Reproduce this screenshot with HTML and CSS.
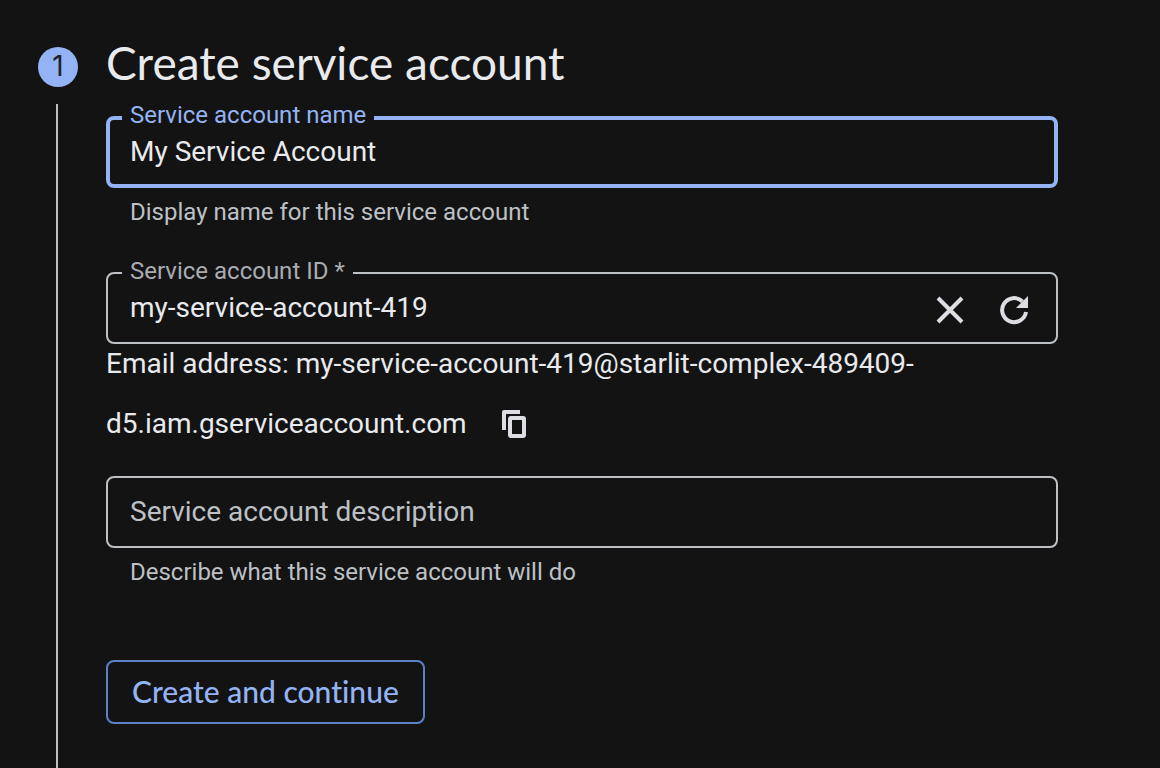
FILE: index.html
```html
<!DOCTYPE html>
<html lang="en">
<head>
<meta charset="utf-8">
<meta name="viewport" content="width=device-width, initial-scale=1">
<title>Create service account</title>
<link rel="stylesheet" href="styles.css">
</head>
<body>
<main class="step">
  <div class="step-rail">
    <span class="step-number">1</span>
    <span class="step-line"></span>
  </div>
  <form class="step-content">
    <h1 class="step-title">Create service account</h1>

    <div class="field field-active">
      <input class="field-input" id="account-name" type="text" value="My Service Account" aria-describedby="name-hint">
      <label class="field-label" for="account-name">Service account name</label>
    </div>
    <p class="hint" id="name-hint">Display name for this service account</p>

    <div class="field">
      <input class="field-input" id="account-id" type="text" value="my-service-account-419" required>
      <label class="field-label" for="account-id">Service account ID *</label>
      <div class="field-actions">
        <button class="icon-button" type="button" aria-label="Clear">
          <svg class="icon" viewBox="0 0 36 36" aria-hidden="true"><path d="M6 6 30 30M30 6 6 30" fill="none" stroke="currentColor" stroke-width="4"/></svg>
        </button>
        <button class="icon-button" type="button" aria-label="Generate a new ID">
          <svg class="icon" viewBox="0 0 36 36" aria-hidden="true"><path d="M30 20A12 12 0 1 1 26.500 9.500" fill="none" stroke="currentColor" stroke-width="4"/><path d="M32 4V16H20Z" fill="currentColor"/></svg>
        </button>
      </div>
    </div>
    <p class="email">Email address: my-service-account-419@starlit-complex-489409-<wbr>d5.iam.gserviceaccount.com
      <button class="copy-button" type="button" aria-label="Copy email address">
        <svg class="icon" viewBox="0 0 36 36" aria-hidden="true"><path d="M8 24V6Q8 4 10 4H26V8H12V24Z" fill="currentColor"/><rect x="16" y="12" width="14" height="18" rx="1" fill="none" stroke="currentColor" stroke-width="4"/></svg>
      </button>
    </p>

    <div class="field">
      <input class="field-input" id="account-description" type="text" placeholder="Service account description" aria-label="Service account description" aria-describedby="description-hint">
    </div>
    <p class="hint" id="description-hint">Describe what this service account will do</p>

    <button class="submit" type="button">Create and continue</button>
  </form>
</main>
</body>
</html>
```

FILE: styles.css
```css
* {
  box-sizing: border-box;
}

body {
  margin: 0;
  background: #131313;
  color: #e8eaed;
  font-family: Roboto, "Liberation Sans", sans-serif;
  font-size: 28px;
}

.step {
  display: flex;
  gap: 28px;
  min-height: 100vh;
  padding: 36px 102px 0 38px;
}

.step-rail {
  display: flex;
  flex-direction: column;
  flex: 0 0 40px;
  gap: 17px;
  padding-top: 11px;
}

.step-number {
  display: flex;
  align-items: center;
  justify-content: center;
  width: 40px;
  height: 40px;
  padding-bottom: 2px;
  border-radius: 50%;
  background: #94b3f4;
  color: #202124;
  font-family: Inter, sans-serif;
  font-size: 28px;
}

.step-line {
  flex: 1;
  width: 2px;
  margin-left: 18px;
  background: #bdc1c6;
}

.step-content {
  flex: 1;
  min-width: 0;
  padding-bottom: 44px;
}

.step-title {
  margin: 0 0 26px;
  font-family: Lato, sans-serif;
  font-size: 46px;
  font-weight: 400;
  line-height: 54px;
}

.field {
  position: relative;
  display: flex;
  align-items: center;
  height: 72px;
  border: 2px solid #bdc1c6;
  border-radius: 8px;
}

.field-active {
  border: 4px solid #94b3f4;
}

.field-input {
  flex: 1;
  min-width: 0;
  height: 100%;
  padding: 0 22px 2px;
  border: 0;
  outline: 0;
  background: transparent;
  color: #e8eaed;
  font: inherit;
}

.field-active .field-input {
  padding: 0 20px 2px;
}

.field-input::placeholder {
  color: #bdc1c6;
  opacity: 1;
}

.field-label {
  position: absolute;
  top: -17px;
  left: 14px;
  padding: 0 8px;
  background: #131313;
  color: #a9acb1;
  font-size: 24px;
  line-height: 28px;
}

.field-active .field-label {
  top: -19px;
  left: 12px;
  color: #94b3f4;
}

.field-actions {
  display: flex;
  gap: 28px;
  padding: 4px 24px 0 0;
}

.icon-button,
.copy-button {
  padding: 0;
  border: 0;
  background: transparent;
  color: #dddee3;
  cursor: pointer;
}

.icon {
  display: block;
  width: 36px;
  height: 36px;
}

.hint {
  margin: 10px 24px 46px;
  color: #bdc1c6;
  font-size: 24px;
  line-height: 28px;
}

.email {
  margin: -10px 0 22px;
  line-height: 60px;
}

.copy-button {
  margin-left: 20px;
  padding-bottom: 4px;
  vertical-align: middle;
}

.submit {
  height: 64px;
  margin-top: 28px;
  padding: 0 24px 2px;
  border: 2px solid #5d80c6;
  border-radius: 8px;
  background: transparent;
  color: #94b3f4;
  font-family: Lato, sans-serif;
  font-size: 30px;
  font-weight: 500;
  font-variant-ligatures: none;
  cursor: pointer;
}
```
